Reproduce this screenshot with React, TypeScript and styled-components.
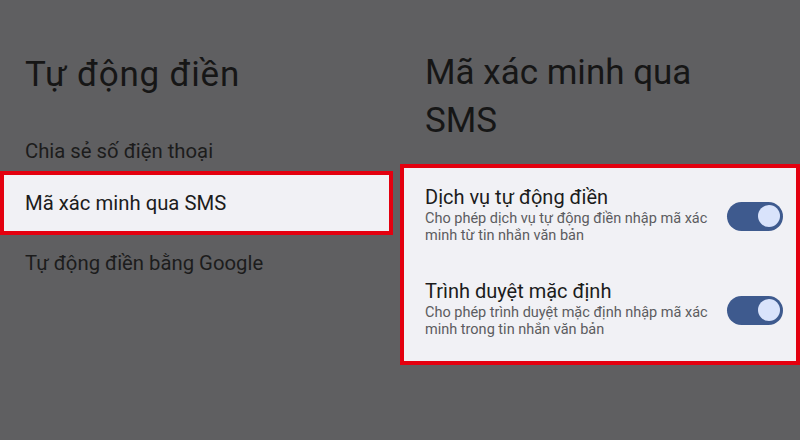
import { createGlobalStyle } from 'styled-components';
import styled from 'styled-components';

const GlobalStyle = createGlobalStyle`
  html, body {
    margin: 0;
    padding: 0;
    background: #5f5f61;
  }
  body {
    font-family: Roboto, "Noto Sans", "DejaVu Sans", sans-serif;
  }
`;

const Page = styled.div`
  display: flex;
  gap: 7px;
  width: 800px;
  height: 440px;
  background: #5f5f61;
  overflow: hidden;
`;

const LeftColumn = styled.div`
  width: 393px;
  padding-top: 51px;
`;

const RightColumn = styled.div`
  flex: 1;
  padding-top: 49px;
`;

const Heading = styled.h1<{ $spacing?: number }>`
  margin: 0;
  padding-left: 25px;
  font-size: 35px;
  line-height: 48px;
  font-weight: 400;
  letter-spacing: ${(p) => p.$spacing ?? 0}px;
  color: #161616;
`;

const Menu = styled.div`
  margin-top: 20px;
  display: flex;
  flex-direction: column;
`;

const MenuItem = styled.div<{ $selected?: boolean }>`
  height: 56px;
  padding: 8px 0 0 25px;
  box-sizing: border-box;
  font-size: 20.3px;
  line-height: 48px;
  color: #1c1c1c;
  ${(p) =>
    p.$selected &&
    `
    background: #f1f1f5;
    border: 4px solid #e3000f;
    padding-top: 4px;
    padding-left: 21px;
    height: 64px;
    margin: -4px 0;
  `}
`;

const Panel = styled.div`
  margin-top: 19px;
  background: #f1f1f5;
  border: 4px solid #e3000f;
  padding: 16px 13px 23px 21px;
  display: flex;
  flex-direction: column;
  gap: 34px;
`;

const SettingRow = styled.div`
  display: flex;
  align-items: center;
  justify-content: space-between;
`;

const SettingText = styled.div`
  display: flex;
  flex-direction: column;
`;

const SettingTitle = styled.div`
  font-size: 20px;
  line-height: 26px;
  color: #1c1c1c;
`;

const SettingSub = styled.div`
  font-size: 14.5px;
  line-height: 17px;
  color: #5c5c60;
  max-width: 290px;
`;

const Track = styled.div<{ $on: boolean }>`
  width: 56px;
  height: 29px;
  border-radius: 15px;
  background: ${(p) => (p.$on ? '#3e5a8e' : '#8e8e92')};
  display: flex;
  align-items: center;
  justify-content: ${(p) => (p.$on ? 'flex-end' : 'flex-start')};
  padding: 0 3px;
  box-sizing: border-box;
  flex-shrink: 0;
  margin-top: 4px;
`;

const Knob = styled.div`
  width: 22px;
  height: 22px;
  border-radius: 50%;
  background: #d9e3fb;
`;

const Toggle = ({ on }: { on: boolean }) => (
  <Track $on={on}>
    <Knob />
  </Track>
);

const settings = [
  {
    title: 'Dịch vụ tự động điền',
    sub: 'Cho phép dịch vụ tự động điền nhập mã xác minh từ tin nhắn văn bản',
  },
  {
    title: 'Trình duyệt mặc định',
    sub: 'Cho phép trình duyệt mặc định nhập mã xác minh trong tin nhắn văn bản',
  },
];

export default function App() {
  return (
    <>
      <GlobalStyle />
      <Page>
        <LeftColumn>
          <Heading $spacing={0.8}>Tự động điền</Heading>
          <Menu>
            <MenuItem>Chia sẻ số điện thoại</MenuItem>
            <MenuItem $selected>Mã xác minh qua SMS</MenuItem>
            <MenuItem>Tự động điền bằng Google</MenuItem>
          </Menu>
        </LeftColumn>
        <RightColumn>
          <Heading>
            Mã xác minh qua
            <br />
            SMS
          </Heading>
          <Panel>
            {settings.map((s) => (
              <SettingRow key={s.title}>
                <SettingText>
                  <SettingTitle>{s.title}</SettingTitle>
                  <SettingSub>{s.sub}</SettingSub>
                </SettingText>
                <Toggle on />
              </SettingRow>
            ))}
          </Panel>
        </RightColumn>
      </Page>
    </>
  );
}
